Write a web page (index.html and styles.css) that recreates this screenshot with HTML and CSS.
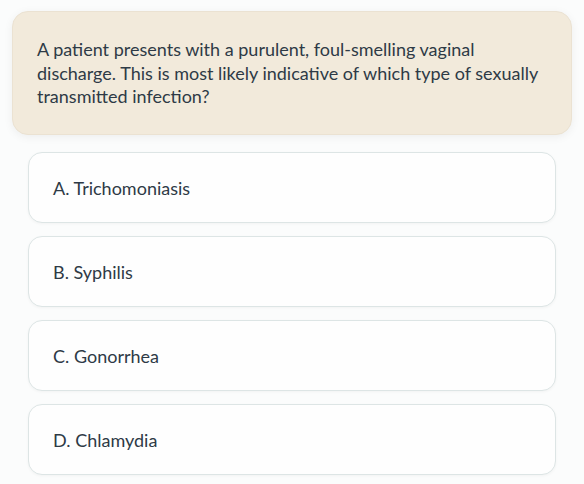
FILE: index.html
```html
<!DOCTYPE html>
<html lang="en">
<head>
<meta charset="utf-8">
<link rel="stylesheet" href="styles.css">
</head>
<body>
<div class="quiz">
  <div class="question">
    <p>A patient presents with a purulent, foul-smelling vaginal discharge. This is most likely indicative of which type of sexually transmitted infection?</p>
  </div>
  <div class="options">
    <div class="option">A. Trichomoniasis</div>
    <div class="option">B. Syphilis</div>
    <div class="option">C. Gonorrhea</div>
    <div class="option">D. Chlamydia</div>
  </div>
</div>
</body>
</html>
```
FILE: styles.css
```css
* { box-sizing: border-box; }
html, body { margin: 0; padding: 0; background: #fbfcfc; }
body {
  font-family: "Lato", "Inter", sans-serif;
  color: #2e3a46;
}
.quiz {
  padding: 11px 12px 8px 12px;
  display: flex;
  flex-direction: column;
  gap: 17px;
}
.question {
  background: #f2eadb;
  border: 1px solid #ebe2d2;
  border-radius: 16px;
  padding: 26px 24px 26px 24px;
  height: 124px;
  box-shadow: 0 2px 10px rgba(0,0,0,0.06);
}
.question p {
  margin: 0;
  font-size: 18px;
  line-height: 23.5px;
}
.options {
  display: flex;
  flex-direction: column;
  gap: 13px;
  padding: 0 16px;
}
.option {
  background: #fefefe;
  border: 1px solid #dde5e5;
  border-radius: 14px;
  height: 71px;
  padding: 0 24px;
  display: flex;
  align-items: center;
  font-size: 18px;
  box-shadow: 0 1px 3px rgba(0,0,0,0.04);
}
```
